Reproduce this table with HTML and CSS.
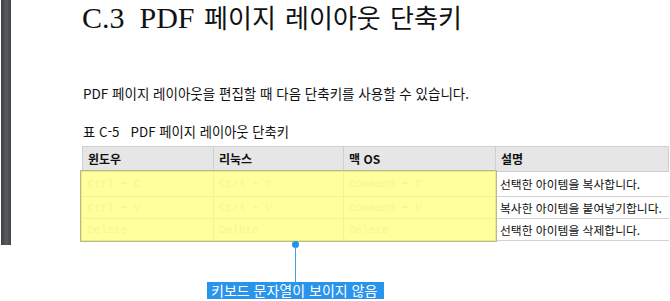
FILE: index.html
```html
<!DOCTYPE html>
<html lang="ko">
<head>
<meta charset="utf-8">
<link rel="stylesheet" href="styles.css">
</head>
<body>
<div class="page">
  <div class="edge"></div>
  <div class="content">
    <h1 class="title">C.3&nbsp; PDF <span class="ko">페이지 레이아웃 단축키</span></h1>
    <p class="para">PDF 페이지 레이아웃을 편집할 때 다음 단축키를 사용할 수 있습니다.</p>
    <p class="caption">표 C-5&nbsp;&nbsp; PDF 페이지 레이아웃 단축키</p>
    <table class="keys">
      <thead>
        <tr><th class="c1">윈도우</th><th class="c2">리눅스</th><th class="c3">맥 OS</th><th class="c4">설명</th></tr>
      </thead>
      <tbody>
        <tr class="r1"><td class="mono">Ctrl + C</td><td class="mono">Ctrl + C</td><td class="mono">Command + C</td><td class="desc">선택한 아이템을 복사합니다.</td></tr>
        <tr class="r2"><td class="mono">Ctrl + V</td><td class="mono">Ctrl + V</td><td class="mono">Command + V</td><td class="desc">복사한 아이템을 붙여넣기합니다.</td></tr>
        <tr class="r3"><td class="mono">Delete</td><td class="mono">Delete</td><td class="mono">Delete</td><td class="desc">선택한 아이템을 삭제합니다.</td></tr>
      </tbody>
    </table>
  </div>
  <div class="highlight"></div>
  <div class="pin-dot"></div>
  <div class="pin-line"></div>
  <div class="pin-label">키보드 문자열이 보이지 않음</div>
</div>
</body>
</html>
```
FILE: styles.css
```css
html, body {
  margin: 0;
  padding: 0;
  background: #ffffff;
  overflow: hidden;
}
.page {
  position: relative;
  display: flex;
  width: 670px;
  height: 301px;
  overflow: hidden;
}
.edge {
  flex: none;
  width: 10px;
  height: 245px;
  margin-left: 1px;
  background: linear-gradient(to right, #3e4144 0%, #55585b 45%, #55585b 65%, #414447 100%);
}
.content {
  flex: none;
  margin-left: 71px;
  display: flex;
  flex-direction: column;
  color: #111;
}
.title {
  margin: 0;
  font-family: "Liberation Serif", "Noto Sans CJK KR", serif;
  font-weight: normal;
  font-size: 30px;
  line-height: 34px;
  color: #111;
  white-space: nowrap;
}
.title .ko {
  font-family: "Noto Sans CJK KR", sans-serif;
  font-size: 26px;
  word-spacing: 2px;
  margin-left: 2px;
}
.para {
  margin: 49px 0 0 1px;
  font-family: "Noto Sans CJK KR", sans-serif;
  font-size: 13.5px;
  line-height: 18px;
  white-space: nowrap;
}
.caption {
  margin: 21px 0 0 1px;
  font-family: "Noto Sans CJK KR", sans-serif;
  font-size: 13.3px;
  line-height: 18px;
  white-space: nowrap;
}
.keys {
  margin: 5px 0 0 0;
  border-collapse: collapse;
  table-layout: fixed;
  width: 587px;
  font-family: "Noto Sans CJK KR", sans-serif;
}
.keys th {
  background: #e6e6e6;
  border: 1px solid #cfcfcf;
  text-align: left;
  font-weight: bold;
  font-size: 12px;
  height: 24px;
  padding: 0 5px;
  line-height: 16px;
  color: #111;
}
.c1 { width: 120px; }
.c2 { width: 119px; }
.c3 { width: 141px; }
.c4 { width: 162px; }
.keys td {
  border: 1px solid #d2d2d2;
  border-right: none;
  padding: 0 5px;
  line-height: 16px;
  white-space: nowrap;
}
.keys td:first-child { border-left: none; }
.r1 td { height: 24px; }
.r2 td { height: 21px; }
.r3 td { height: 21px; }
.mono {
  font-family: "Liberation Mono", "DejaVu Sans Mono", monospace;
  font-size: 11px;
  color: #d9d9d9;
}
.desc {
  font-size: 11.8px;
  color: #111;
  padding-left: 4px !important;
}
.highlight {
  position: absolute;
  left: 80px;
  top: 170px;
  width: 415px;
  height: 70px;
  background: rgba(255, 255, 120, 0.72);
  border: 1px solid #b9b98c;
  box-shadow: inset 0 0 0 1px #eaea88;
}
.pin-dot {
  position: absolute;
  left: 292px;
  top: 241px;
  width: 7px;
  height: 7px;
  border-radius: 50%;
  background: #2592ea;
}
.pin-line {
  position: absolute;
  left: 295px;
  top: 246px;
  width: 1px;
  height: 36px;
  background: #4a9be3;
}
.pin-label {
  position: absolute;
  left: 207px;
  top: 282px;
  width: 177px;
  height: 17px;
  box-sizing: border-box;
  padding: 0 4px;
  background: #2894ec;
  color: #ffffff;
  font-family: "Noto Sans CJK KR", sans-serif;
  font-size: 14px;
  line-height: 17px;
  white-space: nowrap;
}
```
